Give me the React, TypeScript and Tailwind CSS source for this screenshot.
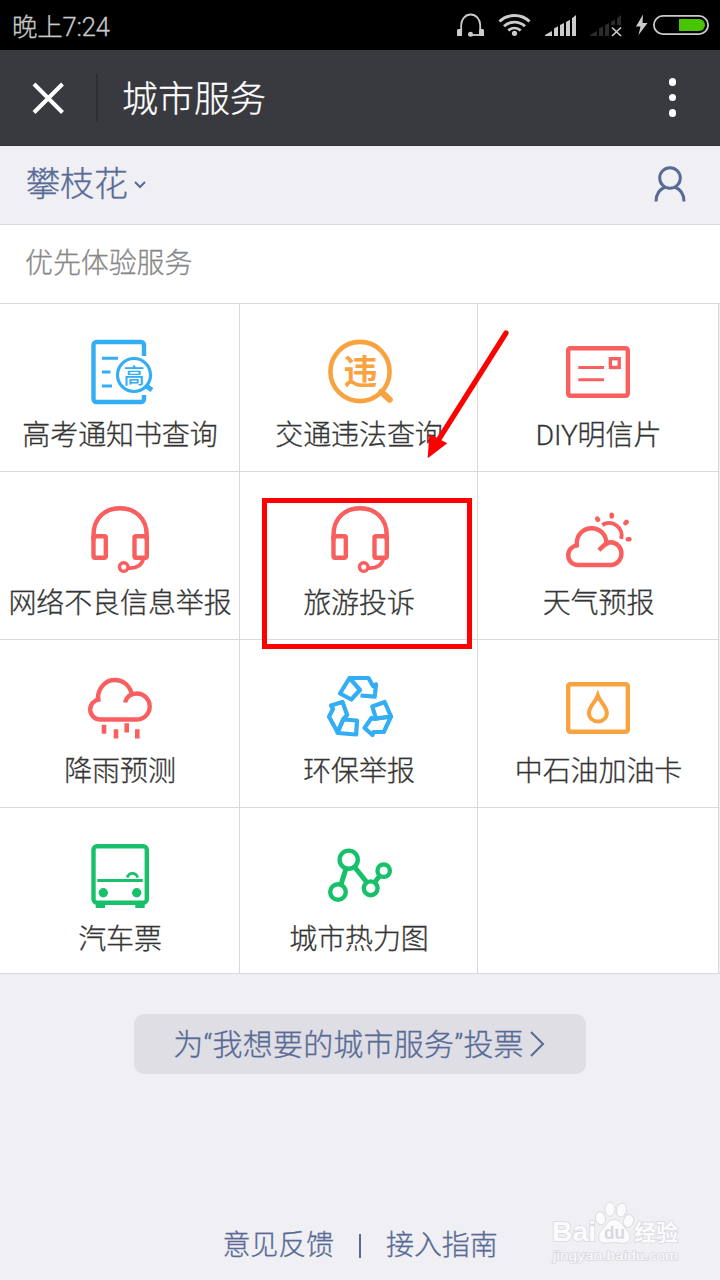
// App.tsx
import type { ReactNode } from 'react';

const RED = '#fa5f60';
const BLUE = '#33adf3';
const ORANGE = '#f9a340';
const GREEN = '#16c169';

function Icon({ color, children }: { color: string; children: ReactNode }) {
  return (
    <svg
      viewBox="0 0 72 72"
      className="w-[72px] h-[72px] shrink-0"
      fill="none"
      stroke={color}
      strokeWidth="4.4"
    >
      {children}
    </svg>
  );
}

function ExamIcon() {
  return (
    <Icon color={BLUE}>
      <path d="M60 20V9a3 3 0 0 0-3-3H12.500a3 3 0 0 0-3 3v54a3 3 0 0 0 3 3H57a3 3 0 0 0 3-3v-4" />
      <path d="M18 22.300h16M18 36h8.500M18 50h10" strokeWidth="3" />
      <circle cx="50" cy="39" r="16.500" strokeWidth="3.200" />
      <path d="M62 50l6 4" strokeWidth="4.800" />
      <text
        x="50"
        y="46.500"
        textAnchor="middle"
        fill={BLUE}
        stroke="none"
        className="font-['Noto_Sans_CJK_SC',sans-serif] text-[21px] font-medium"
      >
        高
      </text>
    </Icon>
  );
}

function ViolationIcon() {
  return (
    <Icon color={ORANGE}>
      <circle cx="36" cy="35.500" r="29.600" strokeWidth="4.600" />
      <path d="M57.500 56l8 7.500" strokeWidth="6.500" strokeLinecap="round" />
      <text
        x="36.500"
        y="48"
        textAnchor="middle"
        fill={ORANGE}
        stroke="none"
        className="font-['Noto_Sans_CJK_SC',sans-serif] text-[34px] font-bold"
      >
        违
      </text>
    </Icon>
  );
}

function PostcardIcon() {
  return (
    <Icon color={RED}>
      <rect x="6.200" y="12.200" width="59.600" height="47.600" rx="2" />
      <path d="M16.300 31.500H42M16.300 43.700H42" strokeWidth="3" />
      <rect x="48.400" y="22.700" width="8.800" height="8.800" strokeWidth="3.400" />
    </Icon>
  );
}

function HeadsetIcon() {
  return (
    <Icon color={RED}>
      <path d="M9.500 36v-5C9.500 14 21 4.200 36 4.200S62.700 14 62.700 31v5" />
      <rect x="9.500" y="32.200" width="12.300" height="21.600" rx="1.500" />
      <rect x="50.500" y="32.200" width="12.300" height="21.600" rx="1.500" />
      <circle cx="39.700" cy="63" r="4.300" strokeWidth="3.500" />
      <path d="M44.500 64c8 .5 13-2.500 14.700-8.500" strokeWidth="3.800" />
    </Icon>
  );
}

function WeatherIcon() {
  return (
    <Icon color={RED}>
      <path d="M14.800 43v-4a14.800 14.800 0 0 1 29.600 0" />
      <path d="M16 41.300C10 42 6.200 46 6.200 51.300 6.200 57 10.500 61 16 61h33.500a11.500 11.500 0 0 0 0-22.800c-5.500 0-8.500 4-12.500 8" />
      <path d="M40.300 21a12.600 12.600 0 0 1 18.900 14" strokeWidth="4" />
      <path
        d="M49.700 10.700v1.800M35.200 14.700l.8 1.200M64.600 18l-1.200 1.200M65.800 35.300h1.600"
        strokeWidth="4.600"
        strokeLinecap="round"
      />
    </Icon>
  );
}

function RainIcon() {
  return (
    <Icon color={RED}>
      <path d="M14 28.500v-4C15 15 22 8 30.700 8c8 0 15 5 17 14" />
      <path d="M16.500 27C10.500 28 6.200 32 6.200 37.500c0 5.500 4.500 10 10.300 10H52.700a13 13 0 0 0 0-26c-6 0-10 3-11.700 9" />
      <path d="M20 52.700v9M32 57.200v9.400M42.700 51.200v9.400M53.300 57.200v9.400" strokeWidth="4.600" />
    </Icon>
  );
}

function RecycleIcon() {
  return (
    <Icon color={BLUE}>
      <g strokeWidth="4.200" strokeLinejoin="round">
        <path d="M25.500 6L16 21.500 27.300 27.500 36 18z" />
        <path d="M25.500 6H44.500L49 14l3-1.500-1.300 12.200L36.500 23.500" />
        <path d="M7 33.500L18.500 30 23.200 43 19.300 47 13.500 60 5 44.700 9 37z" />
        <path d="M19.300 47.500l13.700 1-.8 14-18.700-1.500z" />
        <path d="M48.300 34.500L60.700 30 67 44.500 52 46.500z" />
        <path d="M67 44.500L59.800 60H49.500l-1 3L40.500 56l7-10 3 1z" />
      </g>
    </Icon>
  );
}

function OilIcon() {
  return (
    <Icon color={ORANGE}>
      <rect x="6.200" y="12.200" width="59.600" height="47.600" rx="2" />
      <path
        d="M35.800 23.500c-2.500 7-8.800 11-8.800 17.500 0 5 4 8.500 8.900 8.500s8.900-3.500 8.900-8.500c0-6.500-6.500-10.500-9-17.500z"
        strokeWidth="4"
      />
    </Icon>
  );
}

function BusIcon() {
  return (
    <Icon color={GREEN}>
      <rect x="9.500" y="6.200" width="53.300" height="56.600" rx="3.500" />
      <path d="M11.700 64h9.300v4h-9.300zM51.300 64h9.400v4h-9.400z" fill={GREEN} stroke="none" />
      <path d="M13.300 40.500h45.400" strokeWidth="3" />
      <path d="M43.200 37.500c2-5.500 8.500-5.500 10.500 0" strokeWidth="2.800" />
      <circle cx="19.300" cy="52.700" r="4.700" fill={GREEN} stroke="none" />
      <circle cx="52.700" cy="52.700" r="4.700" fill={GREEN} stroke="none" />
    </Icon>
  );
}

function HeatmapIcon() {
  return (
    <Icon color={GREEN}>
      <circle cx="24.700" cy="19.700" r="9.100" />
      <circle cx="14" cy="52" r="7.800" />
      <circle cx="46.700" cy="48.300" r="6.900" />
      <circle cx="59.700" cy="30.700" r="6.200" />
      <path d="M22 28.500L17 44.500M30.500 27L43 42.500M50.500 42.500L56 35.500" strokeWidth="5" />
    </Icon>
  );
}

const services = [
  { label: '高考通知书查询', icon: <ExamIcon /> },
  { label: '交通违法查询', icon: <ViolationIcon /> },
  { label: 'DIY明信片', icon: <PostcardIcon /> },
  { label: '网络不良信息举报', icon: <HeadsetIcon /> },
  { label: '旅游投诉', icon: <HeadsetIcon /> },
  { label: '天气预报', icon: <WeatherIcon /> },
  { label: '降雨预测', icon: <RainIcon /> },
  { label: '环保举报', icon: <RecycleIcon /> },
  { label: '中石油加油卡', icon: <OilIcon /> },
  { label: '汽车票', icon: <BusIcon /> },
  { label: '城市热力图', icon: <HeatmapIcon /> },
  { label: '', icon: null },
];

function StatusIcons() {
  return (
    <svg viewBox="450 0 270 50" className="w-[270px] h-[50px]" fill="none">
      {/* headset */}
      <path d="M461.200 32V25a9.500 10.500 0 0 1 19 0v7" stroke="#ccc" strokeWidth="1.800" />
      <path d="M457 30.500q0-1.500 1.500-1.500h2.500q1 0 1 1.500V36h-5zM479 30.500q0-1.500 1.500-1.500h2q1.500 0 1.500 1.500V36h-5z" fill="#ccc" />
      <path d="M470 35h12" stroke="#ccc" strokeWidth="1.800" />
      <circle cx="470.500" cy="34.300" r="2.500" fill="#ccc" />
      {/* wifi */}
      <g stroke="#ccc" strokeWidth="2.900">
        <path d="M499.500 21.500c8-8 22-8 30 0" />
        <path d="M504 26.200c6-5.500 15-5.500 21 0" />
        <path d="M508.300 30.500c3.700-3.200 8.700-3.200 12.400 0" />
      </g>
      <circle cx="514.500" cy="33.300" r="2.600" fill="#ccc" />
      {/* signal */}
      <path
        d="M545 36v-1l7-4v5zM554 36v-7.500l4-2.300V36zM560 36V25l4-2v13zM566 36V22l4-2.300V36zM572 36V18.300l4-3.300V36z"
        fill="#ccc"
      />
      {/* second sim, no service */}
      <path
        d="M590 36v-1l7-4v5zM599 36v-7.500l4-2.300V36zM605 36V25l4-2v13zM611 25v-3.300l4-2.300V25zM617 25v-6.700l4-3.300v10z"
        fill="#2b2b2b"
      />
      <path d="M612 27.500l9 8.500M621 27.500l-9 8.500" stroke="#ccc" strokeWidth="1.700" />
      {/* battery */}
      <path d="M643 14.500l-7 12h4.500l-2 8.500 9-12h-5z" fill="#ccc" />
      <rect x="653.900" y="15.900" width="54.200" height="18.200" rx="9.100" stroke="#ccc" strokeWidth="1.800" />
      <path d="M679 19h20a6 6 0 0 1 0 12h-20z" fill="#49c401" />
    </svg>
  );
}

function Watermark() {
  return (
    <svg viewBox="0 0 130 66" className="absolute left-[550px] top-[1200px] w-[130px] h-[66px]">
      <g fill="#fbfbfd" stroke="#dcdce1" strokeWidth="1">
        <ellipse cx="50.500" cy="18.300" rx="5" ry="6.600" transform="rotate(-12 50.500 18.300)" />
        <ellipse cx="60" cy="9.300" rx="5" ry="7" />
        <ellipse cx="71.500" cy="10" rx="5" ry="7" transform="rotate(12 71.500 10)" />
        <ellipse cx="78.500" cy="21" rx="5" ry="6.500" transform="rotate(18 78.500 21)" />
        <path d="M64.500 19.500c6 0 8 6 12 10 6 6 4 13.500-2.500 13.800-4 .2-6-.8-9.500-.8s-6 1-10 .8c-7-.5-8-8.500-2-14.300 4-4 6-9.500 12-9.500z" />
      </g>
      <g
        fill="#fbfbfd"
        stroke="#dadae0"
        strokeWidth="1.600"
        className="[paint-order:stroke] font-['Liberation_Sans','Noto_Sans_CJK_SC',sans-serif]"
      >
        <text x="2" y="41" className="text-[27px] font-bold" textLength="44" lengthAdjust="spacingAndGlyphs">Bai</text>
        <text x="84" y="40" className="text-[22px] font-bold" textLength="44" lengthAdjust="spacingAndGlyphs">经验</text>
        <text x="3" y="60" className="text-[12.500px] font-normal" textLength="125" lengthAdjust="spacingAndGlyphs">jingyan.baidu.com</text>
      </g>
      <text x="54" y="39" fill="#d8d8de" className="font-['Liberation_Sans',sans-serif] text-[18px] font-bold" textLength="21" lengthAdjust="spacingAndGlyphs">du</text>
    </svg>
  );
}

export default function App() {
  return (
    <main className="relative w-[720px] h-[1280px] overflow-hidden flex flex-col bg-[#efeff4] font-['Roboto','Noto_Sans_CJK_SC',sans-serif] font-light [-webkit-text-stroke:0.3px]">

      {/* STATUS BAR */}
      <div className="h-[50px] shrink-0 bg-black flex items-center justify-between pl-3">
        <span className="text-[#c8c8c8] text-[25.500px] leading-[50px] pt-[2px] h-[50px] tracking-[-0.200px] whitespace-nowrap">晚上7:24</span>
        <StatusIcons />
      </div>

      {/* TITLE BAR */}
      <header className="h-24 shrink-0 bg-[#393a3f] border-b border-[#39303a] flex items-center pl-8">
        <svg viewBox="0 0 32 32" className="w-8 h-8" stroke="#fff" strokeWidth="4">
          <path d="M2 2l28.500 28.500M30.500 2L2 30.500" />
        </svg>
        <div className="ml-8 w-0.5 h-12 bg-[#2e2f33]" />
        <h1 className="ml-6 pt-1 text-white text-[36px] leading-none">城市服务</h1>
        <div className="ml-auto mr-11 flex flex-col gap-2">
          <span className="size-[7.500px] rounded-full bg-white" />
          <span className="size-[7.500px] rounded-full bg-white" />
          <span className="size-[7.500px] rounded-full bg-white" />
        </div>
      </header>

      {/* CITY */}
      <div className="h-[79px] shrink-0 border-b border-[#d9d9db] flex items-center pl-[26px] pr-8 text-[#576b95]">
        <span className="text-[34px] leading-[76px] h-[78px]">攀枝花</span>
        <svg viewBox="0 0 14 10" className="ml-[5px] w-[14px] h-[10px]" fill="none" stroke="currentColor" strokeWidth="2">
          <path d="M2 2l5 5 5-5" />
        </svg>
        <svg viewBox="0 0 36 40" className="ml-auto mb-0.5 w-9 h-10" fill="none" stroke="currentColor" strokeWidth="3">
          <circle cx="18" cy="14" r="10.300" />
          <path d="M4 37.500c0-8 4-12.500 9.500-14.500M22.500 23c5.500 2 9.500 6.500 9.500 14.500" />
        </svg>
      </div>

      {/* SERVICES */}
      <section className="shrink-0">
        <h2 className="h-[79px] bg-white border-b border-[#d9d9db] pl-[25px] text-[28px] leading-[78px] tracking-[-0.100px] text-[#888]">
          优先体验服务
        </h2>
        <div className="grid grid-cols-[240px_238px_241px] auto-rows-[168px] h-[670px] overflow-hidden border-b border-[#d9d9db]">
          {services.map((item, i) => (
            <div
              key={i}
              className="bg-white border-r border-b border-[#d9d9db] pt-8 flex flex-col items-center [&:nth-child(3n+1)>svg]:ml-px [&:nth-child(3n+2)>svg]:ml-[3px]"
            >
              {item.icon}
              <span className="mt-[7px] pl-px text-[28px] leading-[42px] tracking-[-0.100px] text-[#353535] whitespace-nowrap">
                {item.label}
              </span>
            </div>
          ))}
        </div>
      </section>

      {/* VOTE */}
      <button className="mt-10 mx-auto w-[452px] h-[60px] shrink-0 rounded-[10px] bg-[#dfdee5] flex items-center justify-center text-[30px] leading-[60px] text-[#576b95]">
        <span className="pt-0.5 tracking-[0.200px] whitespace-nowrap">为“我想要的城市服务”投票</span>
        <svg viewBox="0 0 18 28" className="ml-[5px] w-[18px] h-7" fill="none" stroke="currentColor" strokeWidth="2">
          <path d="M2 2l12 12L2 26" />
        </svg>
      </button>

      {/* FOOTER */}
      <footer className="mt-auto mb-3 flex items-center justify-center text-[28px] leading-[44px] tracking-[-0.100px] text-[#576b95]">
        <span>意见反馈</span>
        <span className="mx-[25px] w-0.5 h-6 bg-[#576b95]" />
        <span>接入指南</span>
      </footer>

      <Watermark />

      {/* highlight and pointer */}
      <div className="absolute left-[262px] top-[498px] w-[210px] h-[151px] border-[5px] border-[#f00]" />
      <svg viewBox="0 0 90 136" className="absolute left-[422px] top-[326px] w-[90px] h-[136px]">
        <path d="M84 7L17 113" stroke="#f00" strokeWidth="5.200" strokeLinecap="round" />
        <path d="M5.700 132.300L7.300 108l18 9.300z" fill="#f00" />
      </svg>
    </main>
  );
}
